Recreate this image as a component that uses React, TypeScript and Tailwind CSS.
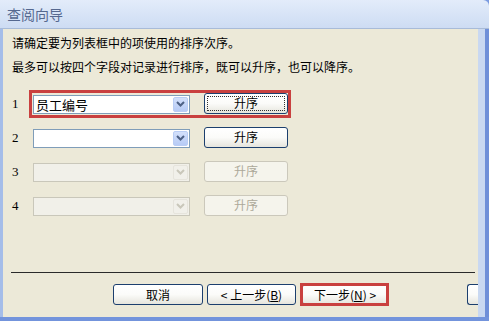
import React from 'react'

const cjk = "font-['Noto_Sans_CJK_SC',sans-serif]"

type RowProps = { n: number; value?: string; disabled?: boolean; focused?: boolean; marked?: boolean }

const Chevron = ({ color }: { color: string }) => (
  <svg width="9" height="6" viewBox="0 0 9 6">
    <path d="M1 1 L4.5 4.5 L8 1" fill="none" stroke={color} strokeWidth="2" />
  </svg>
)

const Combo = ({ value, disabled }: { value?: string; disabled?: boolean }) => (
  <div
    className={`flex items-center justify-between h-[19px] w-[157px] border pl-[2px] pr-[1px] ${
      disabled ? 'border-[#c9c7ba] bg-[#f1f0e9]' : 'border-[#7f9db9] bg-white'
    }`}
  >
    <span className="text-[13px] leading-none text-black">{value}</span>
    <div
      className={`flex items-center justify-center h-[15px] w-[15px] rounded-[2px] border ${
        disabled ? 'border-[#e6e4dc] bg-[#f1f0ea]' : 'border-[#b9cdf5] bg-gradient-to-b from-[#d3e0fb] to-[#b7cbf5]'
      }`}
    >
      <Chevron color={disabled ? '#c9c7ba' : '#4d6185'} />
    </div>
  </div>
)

const XpButton = ({
  children,
  disabled,
  focused,
  className = '',
}: {
  children: React.ReactNode
  disabled?: boolean
  focused?: boolean
  className?: string
}) => (
  <div
    className={`relative flex items-center justify-center h-[21px] rounded-[3px] border text-[12px] leading-none ${
      disabled
        ? 'border-[#cbc8bb] bg-[#f5f4ec] text-[#aca899]'
        : 'border-[#1c3f6e] bg-gradient-to-b from-white via-[#fbfbf9] to-[#e6e5dd] text-black'
    } ${className}`}
  >
    {focused && <div className="absolute inset-[2px] border border-dotted border-[#333]" />}
    {children}
  </div>
)

const SortRow = ({ n, value, disabled, focused, marked }: RowProps) => (
  <div className="relative flex items-center h-[34px]">
    <span className="w-[20px] pl-[9px] text-[13px] font-['Liberation_Serif',serif] text-black">{n}</span>
    <div className="ml-[10px] flex items-center gap-[14px]">
      <Combo value={value} disabled={disabled} />
      <XpButton disabled={disabled} focused={focused} className="w-[84px] -mt-[2px]">
        升序
      </XpButton>
    </div>
    {marked && (
      <div className="absolute left-[26px] top-[3px] h-[28px] w-[262px] border-[3px] border-[#c9403f]" />
    )}
  </div>
)

export default function App() {
  return (
    <div className={`${cjk} w-[489px] h-[321px] bg-[#7b9be0] flex flex-col overflow-hidden`}>
      <div className="h-[29px] shrink-0 bg-gradient-to-b from-[#e3ecfa] to-[#cddcf3] border-b border-[#a8bbd8] rounded-tr-[6px] flex items-center pl-[7px]">
        <span className="text-[14px] text-[#55688f]">查阅向导</span>
      </div>
      <div className="flex flex-1 min-h-0">
        <div className="w-[3px] bg-[#a5bde9]" />
        <div className="w-[475px] bg-[#ece9d8] flex flex-col">
          <div className="pt-[6px] pl-[9px] text-[12px] leading-[16px] text-black">
            <p>请确定要为列表框中的项使用的排序次序。</p>
            <p className="mt-[8px]">最多可以按四个字段对记录进行排序，既可以升序，也可以降序。</p>
          </div>
          <div className="mt-[12px] flex flex-col">
            <SortRow n={1} value="员工编号" focused marked />
            <SortRow n={2} />
            <SortRow n={3} disabled />
            <SortRow n={4} disabled />
          </div>
          <div className="mt-auto">
            <div className="ml-[8px] w-[464px] h-px bg-[#2a2a2a]" />
            <div className="flex items-start h-[44px] pt-[11px]">
              <div className="ml-[110px] flex items-center gap-[4px]">
                <XpButton className="w-[90px]">取消</XpButton>
                <XpButton className="w-[89px]">
                  &lt; 上一步(<span className="underline">B</span>)
                </XpButton>
              </div>
              <div className="relative ml-[6px]">
                <XpButton className="w-[86px]">
                  下一步(<span className="underline">N</span>) &gt;
                </XpButton>
                <div className="absolute -left-[2px] -top-[1px] h-[23px] w-[89px] border-[3px] border-[#c9403f]" />
              </div>
              <XpButton className="ml-[79px] w-[20px] rounded-r-none border-r-0">{''}</XpButton>
            </div>
          </div>
        </div>
        <div className="w-[7px] bg-[#c9d8f1]" />
        <div className="flex-1 bg-[#6f8fd8]" />
      </div>
      <div className="h-[4px] shrink-0 bg-[#7394dc]" />
    </div>
  )
}
